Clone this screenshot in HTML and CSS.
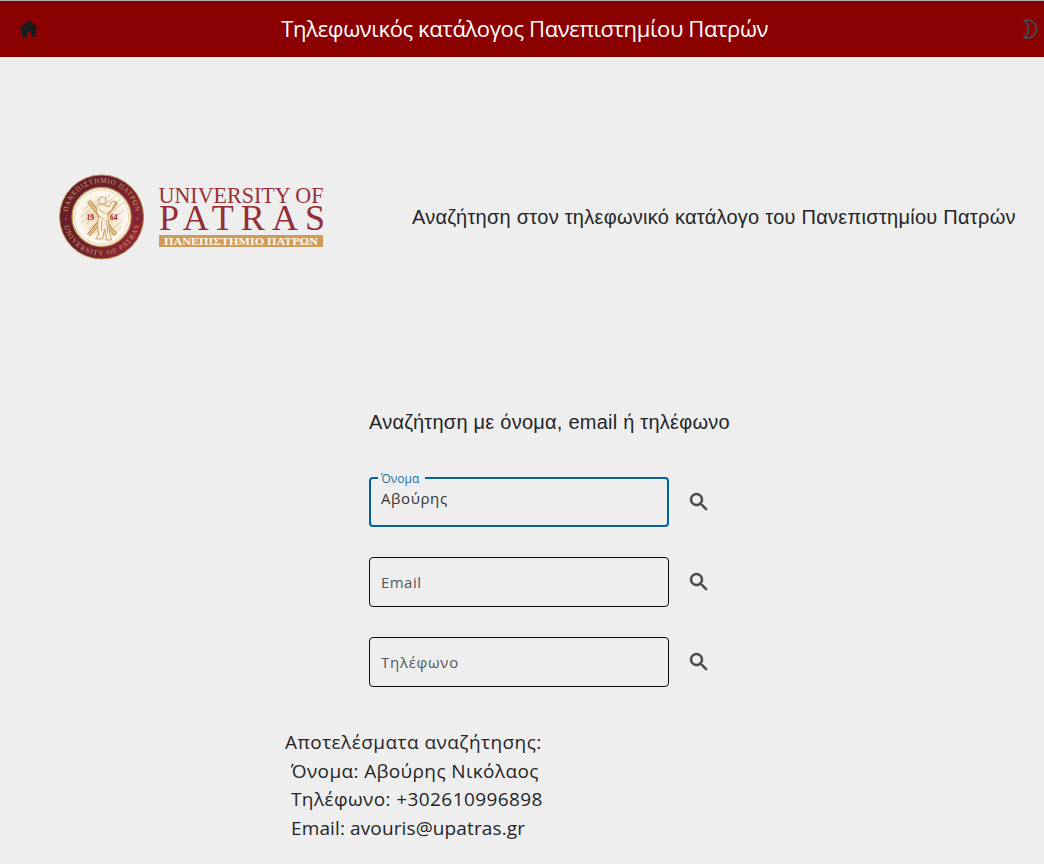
FILE: index.html
```html
<!DOCTYPE html>
<html lang="el">
<head>
<meta charset="utf-8">
<title>Τηλεφωνικός κατάλογος Πανεπιστημίου Πατρών</title>
<link rel="stylesheet" href="styles.css">
</head>
<body>
<header class="appbar">
  <svg class="icon home" viewBox="0 0 24 24"><path d="M10 20v-6h4v6h5v-8h3L12 3 2 12h3v8z"/></svg>
  <h1 class="appbar-title">Τηλεφωνικός κατάλογος Πανεπιστημίου Πατρών</h1>
  <svg class="icon moon" viewBox="0 0 24 24"><path d="M9.5 4c4.41 0 8 3.59 8 8s-3.59 8-8 8c-.34 0-.68-.02-1.01-.07C10.4 17.74 11.5 14.94 11.5 12s-1.1-5.74-3.01-7.93C8.82 4.02 9.16 4 9.5 4m0-2c-1.82 0-3.53.49-5 1.34 2.99 1.73 5 4.95 5 8.66s-2.01 6.93-5 8.66c1.47.85 3.18 1.34 5 1.34 5.52 0 10-4.48 10-10S15.02 2 9.5 2"/></svg>
</header>
<main>
  <section class="intro">
    <svg class="logo" viewBox="0 0 280 90" role="img" aria-label="University of Patras">
      <defs>
        <linearGradient id="ring" x1="0" y1="0" x2="1" y2="0.6"><stop offset="0" stop-color="#621f2b"/><stop offset="0.5" stop-color="#6c202d"/><stop offset="1" stop-color="#8d2634"/></linearGradient>
        <radialGradient id="disc"><stop offset="0" stop-color="#ecd8b5"/><stop offset="0.6" stop-color="#f5ead6"/><stop offset="1" stop-color="#fffdf9"/></radialGradient>
        <path id="arcTop" d="M10.8 45a34.2 34.2 0 0 1 68.4 0"/>
        <path id="arcBottom" d="M6.5 45a38.5 38.5 0 0 0 77 0"/>
      </defs>
      <g transform="translate(.6 0)">
      <circle cx="45" cy="45" r="42" fill="url(#ring)" stroke="#b98a50" stroke-width="1"/>
      <circle cx="45" cy="45" r="29.5" fill="#fffdf9" stroke="#c9995b" stroke-width="1.4"/>
      <circle cx="45" cy="45" r="27" fill="url(#disc)" stroke="#dcbc8c" stroke-width=".7"/>
      <g class="hatch"><path d="M26 38l18-12M24 45l30-23M24 51l36-28M28 53l36-26M32 57l36-27M38 61l30-23M43 66l23-17M31 62l10-8M50 66l15-11"/></g>
      <g class="cross"><path d="M32 29l27 34M60 30L32 63"/></g>
      <g class="cross-inner"><path d="M32 29l27 34M60 30L32 63"/></g>
      <g class="saint">
        <path d="M43 32q-4 3-3 8l2 4-1 9 1 10-3 4h7l2-10 2 9-1 2h6l-2-7-1-11-1-9 4-3 4-8-3-1-4 6-4-2z"/>
        <circle cx="46" cy="28.5" r="3.6"/>
        <path d="M42 37l7 5M41 43l7 5M45 49v10M50 48l1 13" fill="none"/>
      </g>
      <text class="seal-year" x="30" y="47.5">19</text>
      <text class="seal-year" x="53.5" y="47.5">64</text>
      <text class="seal-text"><textPath href="#arcTop" startOffset="5" textLength="97">ΠΑΝΕΠΙΣΤΗΜΙΟ ΠΑΤΡΩΝ</textPath></text>
      <text class="seal-text"><textPath href="#arcBottom" startOffset="9" textLength="103">UNIVERSITY OF PATRAS</textPath></text>
      <circle cx="9.3" cy="47" r=".8" fill="#c89a5e"/><circle cx="80.7" cy="47" r=".8" fill="#c89a5e"/>
      </g>
      <text class="word-top" x="102.5" y="30.5" textLength="165" lengthAdjust="spacingAndGlyphs">UNIVERSITY OF</text>
      <text class="word-main" x="103" y="58" textLength="166">PATRAS</text>
      <rect x="103" y="63" width="164" height="12" fill="#d09c5c"/>
      <text class="word-greek" x="108" y="72.7" textLength="154" lengthAdjust="spacingAndGlyphs">ΠΑΝΕΠΙΣΤΗΜΙΟ ΠΑΤΡΩΝ</text>
    </svg>
    <p class="intro-text">Αναζήτηση στον τηλεφωνικό κατάλογο του Πανεπιστημίου Πατρών</p>
  </section>
  <section class="search">
    <h2 class="search-title">Αναζήτηση με όνομα, email ή τηλέφωνο</h2>
    <div class="row">
      <div class="field active"><span class="label">Όνομα</span><span class="value">Αβούρης</span></div>
      <svg class="icon find" viewBox="0 0 24 24"><path d="M15.5 14h-.79l-.28-.27A6.47 6.47 0 0 0 16 9.5 6.5 6.5 0 1 0 9.5 16c1.61 0 3.09-.59 4.23-1.57l.27.28v.79l5 4.99L20.49 19zm-6 0a4.5 4.5 0 1 1 0-9 4.5 4.5 0 0 1 0 9"/></svg>
    </div>
    <div class="row">
      <div class="field"><span class="placeholder email">Email</span></div>
      <svg class="icon find" viewBox="0 0 24 24"><path d="M15.5 14h-.79l-.28-.27A6.47 6.47 0 0 0 16 9.5 6.5 6.5 0 1 0 9.5 16c1.61 0 3.09-.59 4.23-1.57l.27.28v.79l5 4.99L20.49 19zm-6 0a4.5 4.5 0 1 1 0-9 4.5 4.5 0 0 1 0 9"/></svg>
    </div>
    <div class="row">
      <div class="field"><span class="placeholder">Τηλέφωνο</span></div>
      <svg class="icon find" viewBox="0 0 24 24"><path d="M15.5 14h-.79l-.28-.27A6.47 6.47 0 0 0 16 9.5 6.5 6.5 0 1 0 9.5 16c1.61 0 3.09-.59 4.23-1.57l.27.28v.79l5 4.99L20.49 19zm-6 0a4.5 4.5 0 1 1 0-9 4.5 4.5 0 0 1 0 9"/></svg>
    </div>
  </section>
  <section class="results">
    <div class="heading">Αποτελέσματα αναζήτησης:</div>
    <div class="entry name">Όνομα: Αβούρης Νικόλαος</div>
    <div class="entry phone">Τηλέφωνο: +302610996898</div>
    <div class="entry mail">Email: avouris@upatras.gr</div>
  </section>
</main>
</body>
</html>
```
FILE: styles.css
```css
* { box-sizing: border-box; }
body {
  margin: 0;
  height: 864px;
  overflow: hidden;
  background: #eeeeee;
  color: #252527;
  font-family: "Open Sans", "Noto Sans", sans-serif;
}
h1, h2, p { margin: 0; font-weight: 400; white-space: nowrap; }
.icon { width: 24px; height: 24px; flex: none; fill: #42474e; }
.find { stroke: #42474e; stroke-width: .5; }
.appbar {
  height: 57px;
  border-top: 1px solid #b0adad;
  background: #8b0000;
  display: flex;
  align-items: center;
  justify-content: space-between;
  padding: 0 1.5px 0 17px;
}
.home { fill: #1b1b1d; }
.appbar-title {
  margin-right: 10px;
  padding-bottom: 1px;
  color: #fff;
  font-size: 22px;
  line-height: 29px;
  letter-spacing: -.37px;
}
.intro {
  height: 320px;
  display: flex;
  align-items: center;
  padding-left: 56px;
}
.logo { width: 280px; height: 90px; flex: none; font-family: "Liberation Serif", serif; }
.intro-text {
  margin-left: 76px;
  font-family: "Liberation Sans", sans-serif;
  font-size: 20px;
  letter-spacing: .26px;
}
.hatch, .cross, .cross-inner { fill: none; }
.hatch { stroke: #d6af77; stroke-width: .6; }
.cross { stroke: #c08a48; stroke-width: 4; }
.cross-inner { stroke: #e2bd86; stroke-width: 2.4; }
.saint { fill: #f9efdf; stroke: #c1914f; stroke-width: .8; }
.seal-year { font-size: 7.5px; font-weight: 700; fill: #8a2433; }
.seal-text { font-size: 7.2px; fill: #cb9d60; }
.word-top { font-size: 23px; fill: #9a3038; }
.word-main { font-size: 36px; fill: #962c35; }
.word-greek { font-size: 11px; font-weight: 700; fill: #fff8ee; }
.search {
  margin-left: 369px;
  padding-top: 30px;
  display: flex;
  flex-direction: column;
  align-items: flex-start;
  gap: 30px;
}
.search-title {
  font-family: "Liberation Sans", sans-serif;
  font-size: 20px;
  line-height: 30px;
  letter-spacing: .24px;
  margin-bottom: 10px;
}
.row { display: flex; align-items: center; gap: 18px; }
.field {
  position: relative;
  width: 300px;
  height: 50px;
  border: 1px solid #0c0c0d;
  border-radius: 4px;
  padding: 0 11px;
  display: flex;
  align-items: center;
  font-size: 15px;
}
.field.active { border: 2px solid #00629e; align-items: flex-start; padding: 9px 10px; }
.label {
  position: absolute;
  top: -8px;
  left: 7px;
  padding: 0 6px 0 3px;
  background: #eeeeee;
  color: #1d72a8;
  font-size: 12px;
  line-height: 16px;
}
.value { line-height: 20px; letter-spacing: .6px; color: #333336; }
.placeholder { letter-spacing: .72px; color: #54585e; }
.placeholder.email { letter-spacing: .45px; }
.results { margin: 41px 0 0 285px; font-size: 19px; line-height: 28.7px; white-space: nowrap; }
.heading { letter-spacing: .45px; }
.entry { padding-left: 6px; }
.name { letter-spacing: .37px; }
.phone { letter-spacing: .4px; }
.mail { letter-spacing: .12px; }
```
